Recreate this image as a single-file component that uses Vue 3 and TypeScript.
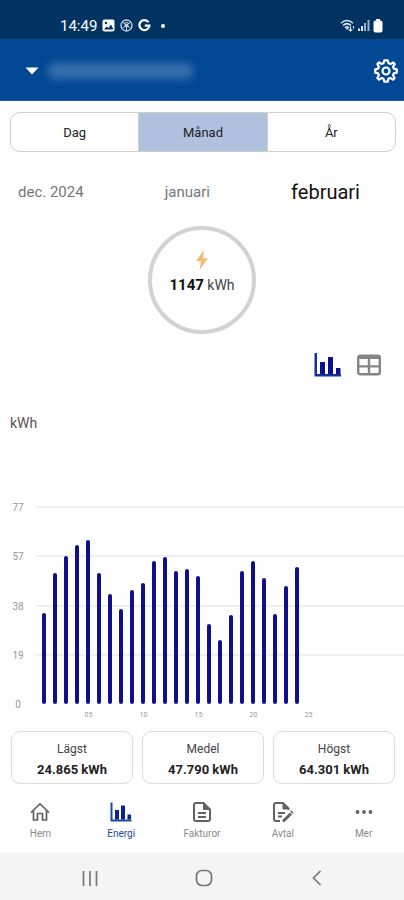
<script setup lang="ts">
import { ref } from 'vue'

interface Stat {
  label: string
  value: string
}

const periods: string[] = ['Dag', 'Månad', 'År']
const period = ref<string>('Månad')

const months: string[] = ['dec. 2024', 'januari', 'februari']
const month = ref<string>('februari')

const view = ref<'chart' | 'table'>('chart')

const axisMax = 77
const axisTicks: number[] = [77, 57, 38, 19, 0]
const daily: number[] = [
  35.6, 51.2, 57.8, 62.1, 64.3, 51.2, 43, 37.3, 44.6, 47.3, 55.9, 57.3,
  52, 52.8, 50.2, 31.3, 24.9, 34.6, 52, 55.9, 49.1, 35, 46, 53.5,
]
const dayLabels: string[] = ['05', '10', '15', '20', '25']

const stats: Stat[] = [
  { label: 'Lägst', value: '24.865 kWh' },
  { label: 'Medel', value: '47.790 kWh' },
  { label: 'Högst', value: '64.301 kWh' },
]

const navItems: string[] = ['Hem', 'Energi', 'Fakturor', 'Avtal', 'Mer']
</script>

<template>
  <div class="app">
    <div class="status">
      <div class="status-left">
        <span class="clock">14:49</span>
        <svg width="13" height="13" viewBox="0 0 13 13">
          <rect x="0.5" y="0.5" width="12" height="12" rx="2" fill="#fff" />
          <path d="M2 10.500L4.500 7.500L6.500 9L9 5.500L11.500 10.500Z" fill="#003262" />
          <circle cx="4" cy="4" r="1.200" fill="#003262" />
        </svg>
        <svg width="13" height="13" viewBox="0 0 13 13" fill="none" stroke="#c9d6e4">
          <circle cx="6.500" cy="6.500" r="5.500" stroke-width="1.300" />
          <path d="M2.500 3.500L6.500 6L10.500 3.500M3 9L6.500 6L10 9M6.500 6V12M4 4.500A3.500 3.500 0 0 1 9 4.500" />
          <circle cx="6.500" cy="6.500" r="1.500" fill="#c9d6e4" />
        </svg>
        <svg width="13" height="13" viewBox="0 0 13 13" fill="none" stroke="#fff" stroke-width="2.200">
          <path d="M10.500 3.200A5 5 0 1 0 11.400 6.600H6.800" />
        </svg>
        <span class="dot"></span>
      </div>
      <div class="status-right">
        <svg width="15" height="13" viewBox="0 0 15 13" fill="none" stroke="#e3eaf1" stroke-width="1.500">
          <path d="M1 4.200Q7 -1.200 13 4.200M3 6.500Q7 2.800 11 6.500M5 8.700Q7 6.900 9 8.700" />
          <path d="M7 11L5.500 9H8.500Z" fill="#e3eaf1" stroke="none" />
          <path d="M10.500 7.500V12M8.700 10.300L10.500 12L12.300 10.300M13.500 7V9.500" stroke-width="1.100" />
        </svg>
        <svg width="12" height="13" viewBox="0 0 12 13">
          <rect x="0" y="9.500" width="2" height="2.500" fill="#dce5ee" />
          <rect x="3" y="7" width="2" height="5" fill="#dce5ee" />
          <rect x="6" y="4" width="2" height="8" fill="#9eb2c7" />
          <rect x="9.500" y="1" width="2" height="11" fill="#9eb2c7" />
        </svg>
        <svg width="10" height="14" viewBox="0 0 10 14" fill="#fff">
          <rect x="3" y="0" width="4" height="3" rx="0.500" />
          <rect x="0.500" y="1.500" width="9" height="12" rx="2" />
        </svg>
      </div>
    </div>

    <header class="header">
      <button class="account" type="button" aria-label="Välj anläggning">
        <svg width="14" height="8" viewBox="0 0 14 8"><path d="M0.500 0.500H13.500L7 7.500Z" fill="#fff" /></svg>
        <span class="redacted"></span>
      </button>
      <button class="icon-btn" type="button" aria-label="Inställningar">
        <svg width="24" height="24" viewBox="0 0 24 24" fill="none" stroke="#fff" stroke-width="2.200" stroke-linejoin="round">
          <path d="M10.300 1.300H13.700L14.500 4.300L16.500 5.100L19.200 3.500L20.800 5.100L19.100 7.700L19.800 9.600L22.800 10.400V13.600L19.800 14.400L19 16.300L20.600 19L19 20.600L16.300 19L14.400 19.800L13.700 22.700H10.300L9.500 19.800L7.600 19L5 20.600L3.300 19L4.900 16.300L4.100 14.400L1.200 13.600V10.400L4.100 9.600L4.900 7.700L3.300 5L5 3.400L7.600 5L9.500 4.300Z" />
          <circle cx="12" cy="12" r="3.500" />
        </svg>
      </button>
    </header>

    <main class="content">
      <div class="periods">
        <button
          v-for="p in periods"
          :key="p"
          type="button"
          :class="['period', { active: p === period }]"
          :aria-pressed="p === period"
          @click="period = p"
        >{{ p }}</button>
      </div>

      <div class="months">
        <button
          v-for="m in months"
          :key="m"
          type="button"
          :class="['month', { active: m === month }]"
          @click="month = m"
        >{{ m }}</button>
      </div>

      <div class="ring">
        <svg width="14" height="20" viewBox="0 0 14 20">
          <path d="M9 0L1 11.200H6L4.500 20L13 8.300H8Z" fill="#efbd75" />
        </svg>
        <div class="total"><strong>1147</strong> kWh</div>
      </div>

      <div class="views">
        <button class="icon-btn" type="button" aria-label="Diagram" @click="view = 'chart'">
          <svg width="28" height="26" viewBox="0 0 28 26">
            <path d="M0.500 1H3V22H27V24.500H0.500Z" fill="#12309b" />
            <path d="M6 10H11V22H6ZM14 5H19V22H14ZM22 16H26.500V22H22Z" fill="#0b138c" />
          </svg>
        </button>
        <button class="icon-btn" type="button" aria-label="Tabell" @click="view = 'table'">
          <svg width="26" height="24" viewBox="0 0 26 24">
            <rect x="2.200" y="2.700" width="21.600" height="18.600" rx="2" fill="none" stroke="#858585" stroke-width="2.400" />
            <path d="M2 2.500H24V6H2ZM11.800 5H14.200V21H11.800ZM3 12.300H23V14.600H3Z" fill="#858585" />
          </svg>
        </button>
      </div>

      <section class="chart">
        <div class="unit">kWh</div>
        <div class="plot">
          <div class="grid">
            <div v-for="t in axisTicks" :key="t" class="tick">
              <span class="tick-label">{{ t }}</span>
              <span :class="['line', { base: t === 0 }]"></span>
            </div>
          </div>
          <div class="bars">
            <span
              v-for="(v, i) in daily"
              :key="i"
              class="bar"
              :style="{ height: (v / axisMax) * 100 + '%' }"
            ></span>
          </div>
        </div>
        <div class="days">
          <span v-for="d in dayLabels" :key="d" class="day">{{ d }}</span>
        </div>
      </section>

      <div class="stats">
        <div v-for="s in stats" :key="s.label" class="stat">
          <span class="stat-label">{{ s.label }}</span>
          <strong class="stat-value">{{ s.value }}</strong>
        </div>
      </div>
    </main>

    <nav class="nav">
      <a v-for="n in navItems" :key="n" href="#" :class="['nav-item', { active: n === 'Energi' }]">
        <svg v-if="n === 'Hem'" width="22" height="22" viewBox="0 0 22 22" fill="none" stroke="#626262" stroke-width="1.700">
          <path d="M2 11.500L11 3L20 11.500M4.500 9.500V19H8.500V12.500H13.500V19H17.500V9.500" />
        </svg>
        <svg v-else-if="n === 'Energi'" width="22" height="22" viewBox="0 0 22 22">
          <path d="M0.500 1.500H2.500V18.500H21.500V20.500H0.500Z" fill="#174a9c" />
          <path d="M5 9H9V18.500H5ZM11 4.500H15V18.500H11ZM17.500 13.500H21V18.500H17.500Z" fill="#0b2391" />
        </svg>
        <svg v-else-if="n === 'Fakturor'" width="22" height="22" viewBox="0 0 22 22" fill="none" stroke="#626262" stroke-width="2">
          <path d="M12.500 2H5Q3 2 3 4V18Q3 20 5 20H17Q19 20 19 18V8.500Z" />
          <path d="M12.500 2V8.500H19Z" fill="#626262" stroke-width="1" />
          <path d="M7 12H15M7 16H15" />
        </svg>
        <svg v-else-if="n === 'Avtal'" width="22" height="22" viewBox="0 0 22 22" fill="none" stroke="#626262" stroke-width="2">
          <path d="M16.500 9V7.500L11 2H4Q2 2 2 4V18Q2 20 4 20H8" />
          <path d="M11 2V8H17Z" fill="#626262" stroke-width="1" />
          <path d="M6 12H13M6 15.500H10" />
          <path d="M11 20.500L19 12.500" stroke-width="3" />
          <path d="M18.700 9.700L21.200 12.200" stroke-width="1.600" />
        </svg>
        <svg v-else width="22" height="22" viewBox="0 0 22 22" fill="#626262">
          <circle cx="4.500" cy="11" r="1.900" /><circle cx="11" cy="11" r="1.900" /><circle cx="17.500" cy="11" r="1.900" />
        </svg>
        <span>{{ n }}</span>
      </a>
    </nav>

    <div class="system">
      <button class="icon-btn" type="button" aria-label="Senaste">
        <svg width="18" height="18" viewBox="0 0 18 18" stroke="#777" stroke-width="1.700"><path d="M2.500 2V17M9 2V17M15.500 2V17" /></svg>
      </button>
      <button class="icon-btn" type="button" aria-label="Hem">
        <svg width="18" height="18" viewBox="0 0 18 18" fill="none" stroke="#777" stroke-width="1.700"><rect x="1.500" y="1.500" width="15" height="15" rx="5.500" /></svg>
      </button>
      <button class="icon-btn" type="button" aria-label="Tillbaka">
        <svg width="18" height="18" viewBox="0 0 18 18" fill="none" stroke="#777" stroke-width="1.700"><path d="M12.500 2L5.500 9L12.500 16" /></svg>
      </button>
    </div>
  </div>
</template>

<style>
body {
  margin: 0;
  background: #fefefe;
}
</style>

<style scoped>
.app {
  min-height: 100vh;
  display: flex;
  flex-direction: column;
  background: #fefefe;
  color: #222;
  font-family: Roboto, "Liberation Sans", sans-serif;
}
.app * {
  box-sizing: border-box;
}
svg {
  display: block;
  flex: none;
}
button {
  margin: 0;
  padding: 0;
  border: 0;
  background: none;
  color: inherit;
  font-family: inherit;
  cursor: pointer;
}
.status {
  height: 39px;
  padding: 12px 21px 0 60px;
  display: flex;
  justify-content: space-between;
  align-items: center;
  background: #003262;
  color: #fff;
}
.status-left {
  display: flex;
  align-items: center;
  gap: 5px;
}
.clock {
  font-size: 15px;
  line-height: 20px;
}
.dot {
  width: 4px;
  height: 4px;
  margin-left: 5px;
  border-radius: 50%;
  background: #fff;
}
.status-right {
  display: flex;
  align-items: center;
  gap: 3px;
}
.header {
  height: 62px;
  padding: 2px 6px 0 25px;
  display: flex;
  justify-content: space-between;
  align-items: center;
  background: #004893;
  border-bottom: 1px solid #2f549a;
}
.account {
  display: flex;
  align-items: center;
  gap: 9px;
}
.redacted {
  width: 145px;
  height: 16px;
  border-radius: 6px;
  background: #386fac;
  filter: blur(4px);
}
.content {
  flex: 1;
  display: flex;
  flex-direction: column;
}
.periods {
  height: 40px;
  margin: 11px 8px 0 10px;
  display: flex;
  border: 1px solid #cfd1c8;
  border-radius: 10px;
  overflow: hidden;
}
.period {
  flex: 1;
  padding-top: 2px;
  font-size: 13px;
  line-height: 18px;
}
.period + .period {
  border-left: 1px solid #cfd1c8;
}
.period.active {
  background: #b0c0df;
}
.months {
  height: 40px;
  margin-top: 20px;
  padding: 0 44px 0 18px;
  display: flex;
  justify-content: space-between;
  align-items: center;
}
.month {
  color: #777;
  font-size: 15px;
  line-height: 24px;
}
.month.active {
  color: #111;
  font-size: 20px;
}
.ring {
  width: 108px;
  height: 108px;
  margin: 14px auto 0;
  padding-top: 20px;
  display: flex;
  flex-direction: column;
  align-items: center;
  gap: 6px;
  border: 4px solid #d2d2d2;
  border-radius: 50%;
}
.total {
  font-size: 14px;
  line-height: 18px;
  color: #444;
}
.total strong {
  color: #111;
  font-size: 15px;
}
.views {
  margin-top: 18px;
  padding-right: 22px;
  display: flex;
  justify-content: flex-end;
  align-items: center;
  gap: 14px;
}
.chart {
  margin-top: 36px;
}
.unit {
  padding-left: 10px;
  font-size: 14px;
  line-height: 18px;
  color: #555;
}
.plot {
  height: 197px;
  margin-top: 75px;
  display: grid;
}
.grid,
.bars {
  grid-area: 1 / 1;
  min-height: 0;
}
.grid {
  display: flex;
  flex-direction: column;
  justify-content: space-between;
}
.tick {
  height: 0;
  display: flex;
  align-items: center;
}
.tick-label {
  width: 36px;
  padding-top: 2px;
  text-align: center;
  font-size: 10px;
  line-height: 12px;
  color: #999;
}
.line {
  flex: 1;
  height: 2px;
  background: #efeff0;
}
.line.base {
  background: none;
}
.bars {
  padding-left: 42px;
  display: flex;
  align-items: flex-end;
  gap: 7px;
}
.bar {
  width: 4px;
  border-radius: 2px;
  background: #10108a;
}
.days {
  margin-top: 6px;
  padding-left: 61px;
  display: flex;
}
.day {
  width: 55px;
  text-align: center;
  font-size: 7px;
  line-height: 10px;
  color: #999;
}
.stats {
  margin: 11px 9px 0 11px;
  display: flex;
  gap: 9px;
}
.stat {
  flex: 1;
  height: 53px;
  padding-top: 3px;
  display: flex;
  flex-direction: column;
  align-items: center;
  justify-content: center;
  gap: 3px;
  border: 1px solid #dcdcdc;
  border-radius: 9px;
}
.stat-label,
.stat-value {
  font-size: 12px;
  line-height: 18px;
}
.stat-label {
  color: #444;
}
.stat-value {
  font-size: 13px;
}
.nav {
  height: 69px;
  display: flex;
}
.nav-item {
  flex: 1;
  padding-top: 17px;
  display: flex;
  flex-direction: column;
  align-items: center;
  gap: 5px;
  color: #8a8a8a;
  font-size: 10px;
  line-height: 12px;
  text-decoration: none;
}
.nav-item.active {
  color: #1c4d98;
}
.system {
  height: 47px;
  padding: 2px 78px 0 81px;
  display: flex;
  justify-content: space-between;
  align-items: center;
  background: #f4f4f4;
}
</style>
